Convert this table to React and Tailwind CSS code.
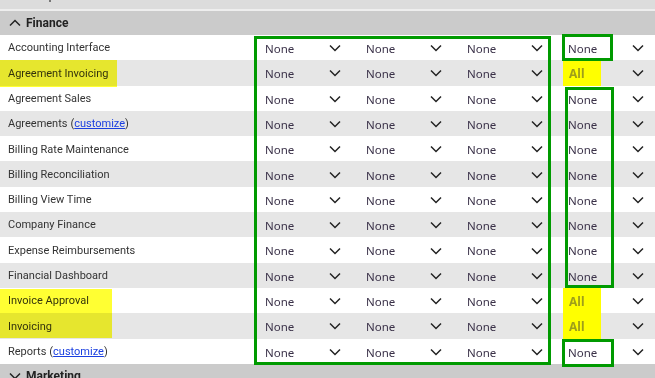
const rows = [
  { name: "Accounting Interface", last: "None" },
  { name: "Agreement Invoicing", last: "All", mark: true },
  { name: "Agreement Sales", last: "None" },
  { name: "Agreements", last: "None", customize: true },
  { name: "Billing Rate Maintenance", last: "None" },
  { name: "Billing Reconciliation", last: "None" },
  { name: "Billing View Time", last: "None" },
  { name: "Company Finance", last: "None" },
  { name: "Expense Reimbursements", last: "None" },
  { name: "Financial Dashboard", last: "None" },
  { name: "Invoice Approval", last: "All", mark: true },
  { name: "Invoicing", last: "All", mark: true },
  { name: "Reports", last: "None", customize: true },
];

function Chevron({ up = false }) {
  return (
    <svg width="12" height="8" viewBox="0 0 12 8" className="shrink-0">
      <path
        d={up ? "M1 6.5 L6 1.5 L11 6.5" : "M1 1.5 L6 6.5 L11 1.5"}
        fill="none"
        stroke="#222"
        strokeWidth="1.5"
      />
    </svg>
  );
}

function Select({ value }) {
  const all = value === "All";
  return (
    <div className="flex items-center w-[101px] h-full pr-[11px]">
      {all ? (
        <div className="ml-[9px] w-[38px] h-full bg-[#ffff00] flex items-center pl-[6px] pt-[2px] font-bold text-[12px] text-[#9e9e1a]">
          All
        </div>
      ) : (
        <span className="ml-[14px] pt-[2px] text-[#3a3148]">{value}</span>
      )}
      <span className="ml-auto pt-[1px]">
        <Chevron />
      </span>
    </div>
  );
}

function SectionBar({ title, open }) {
  return (
    <div className="flex items-center gap-[5px] h-[24px] bg-[#cbcbcb] pl-[9px] font-bold text-[12px] text-[#222]">
      <Chevron up={open} />
      <span>{title}</span>
    </div>
  );
}

export default function App() {
  return (
    <div className="relative w-[655px] h-[378px] overflow-hidden bg-white font-['Roboto',sans-serif] text-[11px] text-[#333]">
      <div className="h-[9px] bg-[#dcdcdc] relative">
        <span className="absolute left-[49px] top-0 w-[2px] h-[2px] bg-[#777]" />
      </div>
      <div className="h-[2px] bg-[#eeeeee]" />
      <SectionBar title="Finance" open />

      <div>
        {rows.map((r, i) => (
          <div
            key={r.name}
            className={`flex items-center h-[25.3px] ${i % 2 ? "bg-[#e6e6e6]" : "bg-white"}`}
          >
            <div className="w-[254px] pl-[8px] pt-[2px] h-full flex items-center">
              {r.name}
              {r.customize && (
                <span className="ml-[3px]">
                  (<span className="text-[#1a3fe0] underline">customize</span>)
                </span>
              )}
            </div>
            <div className="flex h-full font-['Noto_Sans',sans-serif] text-[11.5px]">
              <Select value="None" />
              <Select value="None" />
              <Select value="None" />
              <Select value={r.last} />
            </div>
          </div>
        ))}
      </div>

      <div className="flex items-center gap-[5px] h-[24px] bg-[#cbcbcb] pl-[9px] font-bold text-[12px] text-[#222]">
        <Chevron />
        <span>Marketing</span>
      </div>

      {/* highlighted labels */}
      <div className="absolute left-0 top-[60px] w-[117px] h-[27px] bg-[#ffff33] mix-blend-multiply" />
      <div className="absolute left-0 top-[289px] w-[112px] h-[49px] bg-[#ffff33] mix-blend-multiply" />

      {/* green review boxes */}
      <div className="absolute left-[254px] top-[36px] w-[297px] h-[329px] border-[3px] border-[#009a00]" />
      <div className="absolute left-[562px] top-[34px] w-[51px] h-[27px] border-[3px] border-[#009a00]" />
      <div className="absolute left-[565px] top-[87px] w-[49px] h-[201px] border-[3px] border-[#009a00]" />
      <div className="absolute left-[562px] top-[339px] w-[52px] h-[28px] border-[3px] border-[#009a00]" />
    </div>
  );
}
